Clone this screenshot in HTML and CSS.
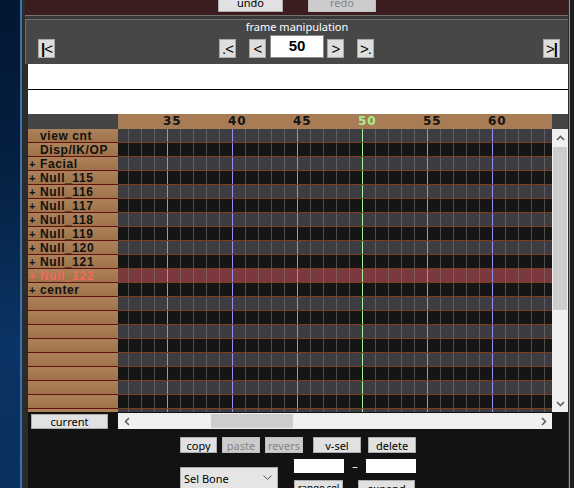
FILE: index.html
```html
<!DOCTYPE html>
<html>
<head>
<meta charset="utf-8">
<title>Timeline</title>
<link rel="stylesheet" href="styles.css">
</head>
<body>
<div class="desk"></div>
<div class="win">
  <div class="topband">
    <button class="wbtn undo">undo</button>
    <button class="wbtn dis redo">redo</button>
  </div>
  <div class="sep"></div>
  <div class="fm">
    <div class="fm-title">frame manipulation</div>
    <div class="fm-row">
      <button class="nb first"><b>|</b>&lt;</button>
      <button class="nb prevk">.&lt;</button>
      <button class="nb prev">&lt;</button>
      <div class="frame-input">50</div>
      <button class="nb next">&gt;</button>
      <button class="nb nextk">&gt;.</button>
      <button class="nb last">&gt;<b>|</b></button>
    </div>
  </div>
  <div class="wb wb1"></div>
  <div class="wb wb2"></div>
  <div class="grid">
    <div class="lh"></div>
    <div class="ruler">
      <span>35</span><span>40</span><span>45</span><span class="cur">50</span><span>55</span><span>60</span>
    </div>
    <div class="corner"></div>
    <div class="labels">
      <div class="l"><span class="plus"></span>view cnt</div>
      <div class="l"><span class="plus"></span>Disp/IK/OP</div>
      <div class="l"><span class="plus">+</span>Facial</div>
      <div class="l"><span class="plus">+</span>Null_115</div>
      <div class="l"><span class="plus">+</span>Null_116</div>
      <div class="l"><span class="plus">+</span>Null_117</div>
      <div class="l"><span class="plus">+</span>Null_118</div>
      <div class="l"><span class="plus">+</span>Null_119</div>
      <div class="l"><span class="plus">+</span>Null_120</div>
      <div class="l"><span class="plus">+</span>Null_121</div>
      <div class="l hot"><span class="plus">+</span>Null_122</div>
      <div class="l"><span class="plus">+</span>center</div>
      <div class="l"></div>
      <div class="l"></div>
      <div class="l"></div>
      <div class="l"></div>
      <div class="l"></div>
      <div class="l"></div>
      <div class="l"></div>
      <div class="l"></div>
      <div class="l"></div>
    </div>
    <div class="tracks">
      <div class="t g"></div>
      <div class="t k"></div>
      <div class="t g"></div>
      <div class="t k"></div>
      <div class="t g"></div>
      <div class="t k"></div>
      <div class="t g"></div>
      <div class="t k"></div>
      <div class="t g"></div>
      <div class="t k"></div>
      <div class="t sel"></div>
      <div class="t k"></div>
      <div class="t g"></div>
      <div class="t k"></div>
      <div class="t g"></div>
      <div class="t k"></div>
      <div class="t g"></div>
      <div class="t k"></div>
      <div class="t g"></div>
      <div class="t k"></div>
      <div class="t g"></div>
    </div>
    <div class="vscroll">
      <div class="sb-btn"><svg width="9" height="6" viewBox="0 0 9 6"><polyline points="1,5 4.5,1.5 8,5" fill="none" stroke="#606060" stroke-width="1.6"/></svg></div>
      <div class="vtrack"><div class="vthumb"></div></div>
      <div class="sb-btn"><svg width="9" height="6" viewBox="0 0 9 6"><polyline points="1,1 4.5,4.5 8,1" fill="none" stroke="#606060" stroke-width="1.6"/></svg></div>
    </div>
    <div class="cur-cell"><button class="wbtn current">current</button></div>
    <div class="hscroll">
      <div class="hs-btn"><svg width="6" height="9" viewBox="0 0 6 9"><polyline points="5,1 1.5,4.5 5,8" fill="none" stroke="#606060" stroke-width="1.6"/></svg></div>
      <div class="htrack"><div class="hthumb"></div></div>
      <div class="hs-btn"><svg width="6" height="9" viewBox="0 0 6 9"><polyline points="1,1 4.5,4.5 1,8" fill="none" stroke="#606060" stroke-width="1.6"/></svg></div>
    </div>
    <div class="hcorner"></div>
  </div>
  <div class="bp">
    <div class="bp-row1">
      <button class="wbtn copy">copy</button>
      <button class="wbtn dis paste">paste</button>
      <button class="wbtn dis revers">revers</button>
      <button class="wbtn vsel">v-sel</button>
      <button class="wbtn del">delete</button>
    </div>
    <div class="bp-row2">
      <div class="dropdown">
        <span>Sel Bone</span>
        <svg width="9" height="6" viewBox="0 0 9 6"><polyline points="0.5,0.5 4.5,4.5 8.5,0.5" fill="none" stroke="#555" stroke-width="1"/></svg>
      </div>
      <div class="range">
        <div class="range-inputs">
          <div class="rin"></div>
          <div class="dash">–</div>
          <div class="rin"></div>
        </div>
        <div class="range-btns">
          <button class="wbtn rsel">range sel</button>
          <button class="wbtn expand">expand</button>
        </div>
      </div>
    </div>
  </div>
</div>
<div class="edge"></div>
</body>
</html>
```
FILE: styles.css
```css
html, body {
  margin: 0;
  padding: 0;
}
body {
  width: 574px;
  height: 488px;
  overflow: hidden;
  display: flex;
  background: #0b2d57;
  font-family: "Noto Sans", "Liberation Sans", sans-serif;
}
.desk {
  width: 20px;
  flex: none;
  background: linear-gradient(180deg, #031632 0%, #052042 35%, #0a3464 70%, #0a305e 100%);
  border-right: 2px solid #3d72aa;
}
.win {
  width: 543px;
  flex: none;
  padding-left: 3px;
  background: #2b2b2b;
  display: flex;
  flex-direction: column;
  overflow: hidden;
}
.edge {
  flex: none;
  width: 6px;
  background: linear-gradient(90deg, #2b2b2b 0 1px, #8f8f8f 1px 2px, #1e1e1e 2px);
}

/* generic windows-like button */
.wbtn {
  display: block;
  box-sizing: border-box;
  height: 16px;
  padding: 0;
  border: 1px solid #adadad;
  background: #e1e1e1;
  color: #000;
  font-family: "Noto Sans", "Liberation Sans", sans-serif;
  font-size: 11px;
  line-height: 13px;
  white-space: nowrap;
  overflow: hidden;
  flex: none;
}
.wbtn.dis {
  background: #cccccc;
  color: #858585;
  border-color: #bfbfbf;
}

/* top band */
.topband {
  flex: none;
  height: 15px;
  box-sizing: border-box;
  padding-bottom: 3px;
  background: #3b1d1f;
  display: flex;
  align-items: flex-end;
  overflow: hidden;
}
.undo {
  height: 20px;
  width: 65px;
  margin-left: 193px;
}
.redo {
  height: 20px;
  width: 68px;
  margin-left: 25px;
}
.sep {
  flex: none;
  height: 4px;
  box-sizing: border-box;
  border-top: 1px solid #737373;
  background: #393939;
}

/* frame manipulation */
.fm {
  flex: none;
  height: 45px;
  box-sizing: border-box;
  border-top: 1px solid #6d6d6d;
  border-left: 1px solid #6d6d6d;
  background: #474747;
  padding-bottom: 6px;
  display: flex;
  flex-direction: column;
}
.fm-title {
  height: 15px;
  line-height: 13px;
  text-align: center;
  color: #fff;
  font-size: 11px;
}
.fm-row {
  height: 23px;
  display: flex;
  align-items: flex-end;
}
.nb {
  flex: none;
  width: 17px;
  height: 19px;
  box-sizing: border-box;
  padding: 0;
  border: 1px solid #a9a9a9;
  background: #dedede;
  color: #000;
  font-family: "Liberation Sans", sans-serif;
  font-size: 15px;
  line-height: 16px;
  text-align: center;
  white-space: nowrap;
  letter-spacing: -1px;
}
.nb b {
  font-weight: bold;
}
.first { margin-left: 12px; }
.prevk { margin-left: 164px; }
.prev { margin-left: 13px; }
.frame-input {
  flex: none;
  width: 54px;
  height: 23px;
  box-sizing: border-box;
  margin-left: 4px;
  border: 1px solid #8a8a8a;
  background: #fff;
  text-align: center;
  font-family: "Liberation Sans", sans-serif;
  font-weight: bold;
  font-size: 15px;
  line-height: 16px;
  padding-top: 2px;
  color: #000;
}
.next { margin-left: 3px; }
.nextk { margin-left: 13px; }
.last { margin-left: auto; margin-right: 8px; }

/* white boxes */
.wb {
  flex: none;
  margin-left: 3px;
  background: #fff;
}
.wb1 {
  height: 25px;
  border-bottom: 1px solid #000;
}
.wb2 {
  height: 24px;
}

/* timeline grid */
.grid {
  flex: none;
  margin-left: 3px;
  display: grid;
  grid-template-columns: 90px 434px 16px;
  grid-template-rows: 15px 283px 17px;
  background: #121212;
}
.lh, .corner {
  background: #454545;
}
.ruler {
  background: #a87d55;
  padding-left: 45px;
  display: flex;
  font-family: "Liberation Sans Narrow", "DejaVu Sans", sans-serif;
  font-weight: bold;
  font-size: 12px;
  line-height: 15px;
  color: #141414;
  letter-spacing: 1px;
}
.ruler span {
  width: 65px;
  flex: none;
}
.ruler .cur {
  color: #a6f08c;
}
.labels {
  overflow: hidden;
}
.l {
  height: 13px;
  border-bottom: 1px solid #5e1212;
  background: linear-gradient(180deg, #ad825a, #9f7249);
  font-family: "Liberation Sans", sans-serif;
  font-weight: bold;
  font-size: 12px;
  line-height: 14px;
  letter-spacing: 0.6px;
  color: #111;
  padding-left: 1px;
  white-space: nowrap;
}
.l.hot {
  color: #f26b5c;
}
.plus {
  display: inline-block;
  width: 11px;
  font-size: 11px;
  letter-spacing: 0;
}
.tracks {
  overflow: hidden;
}
.t {
  height: 13px;
  border-bottom: 1px solid #7c3f1f;
  background-image:
    linear-gradient(90deg, transparent 244px, #a8f0a0 244px 245px, transparent 245px),
    repeating-linear-gradient(90deg, transparent 0 49px, #9090f0 49px 50px, transparent 50px 65px),
    repeating-linear-gradient(90deg, transparent 0 10px, rgba(125, 125, 125, 0.55) 10px 11px, transparent 11px 13px);
}
.t.g { background-color: #3c3c41; }
.t.k { background-color: #151515; }
.t.sel { background-color: #7b393d; }

/* vertical scrollbar */
.vscroll {
  background: #f0f0f0;
  display: flex;
  flex-direction: column;
}
.sb-btn {
  height: 17px;
  flex: none;
  display: flex;
  align-items: center;
  justify-content: center;
}
.vtrack {
  flex: 1;
}
.vthumb {
  margin: 1px 1px 0 1px;
  height: 163px;
  background: #cdcdcd;
}

/* bottom row of grid */
.cur-cell {
  padding: 2px 0 0 3px;
}
.current {
  width: 77px;
  height: 15px;
}
.hscroll {
  margin-top: 1px;
  background: #f0f0f0;
  display: flex;
}
.hs-btn {
  width: 17px;
  flex: none;
  display: flex;
  align-items: center;
  justify-content: center;
}
.htrack {
  flex: 1;
  padding-top: 1px;
}
.hthumb {
  margin-left: 76px;
  width: 82px;
  height: 14px;
  background: #cdcdcd;
}
.hcorner {
  background: #121212;
}

/* bottom panel */
.bp {
  flex: 1;
  margin-left: 3px;
  background: #121212;
  padding: 8px 0 0 152px;
}
.bp-row1 {
  display: flex;
}
.copy { width: 37px; }
.paste { width: 38px; margin-left: 5px; }
.revers { width: 38px; margin-left: 5px; }
.vsel { width: 48px; margin-left: 10px; }
.del { width: 48px; margin-left: 7px; }
.bp-row2 {
  display: flex;
  margin-top: 6px;
}
.dropdown {
  flex: none;
  width: 98px;
  height: 22px;
  box-sizing: border-box;
  margin-top: 8px;
  border: 1px solid #acacac;
  background: #e5e5e5;
  display: flex;
  align-items: center;
  justify-content: space-between;
  padding: 0 5px 0 3px;
  font-size: 11px;
  color: #000;
}
.range {
  margin-left: 16px;
}
.range-inputs {
  display: flex;
  align-items: center;
}
.rin {
  width: 50px;
  height: 14px;
  background: #fff;
}
.dash {
  width: 22px;
  text-align: center;
  color: #fff;
  font-size: 11px;
  line-height: 14px;
}
.range-btns {
  display: flex;
  margin-top: 7px;
}
.rsel {
  width: 49px;
  font-size: 10px;
  letter-spacing: -0.2px;
}
.expand { width: 57px; margin-left: 15px; }
```
